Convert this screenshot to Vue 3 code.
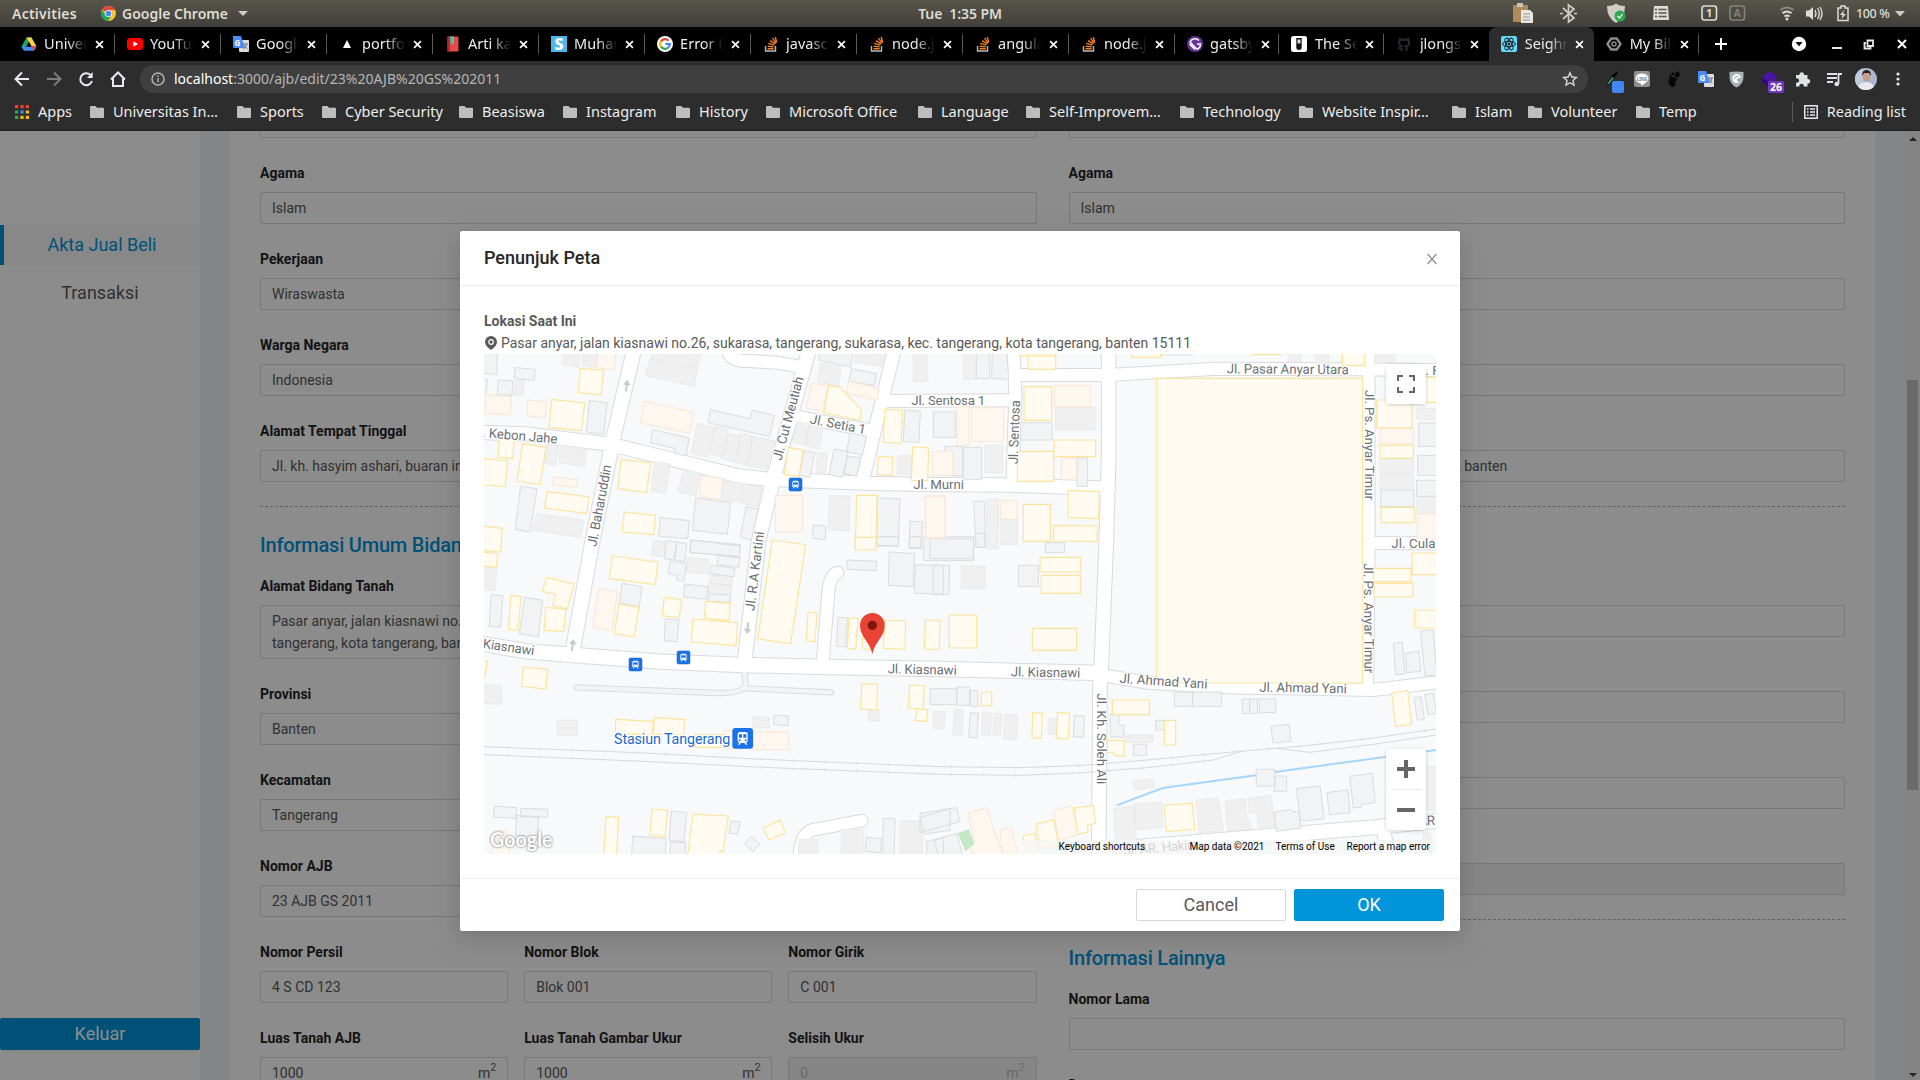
<script setup>
const tabs = [
  { icon: 'drive', title: 'Universitas' },
  { icon: 'youtube', title: 'YouTube' },
  { icon: 'translate', title: 'Google Tr' },
  { icon: 'vercel', title: 'portfolio' },
  { icon: 'book', title: 'Arti kata' },
  { icon: 'scribd', title: 'Muhammad' },
  { icon: 'google', title: 'Error Ha' },
  { icon: 'stack', title: 'javascript' },
  { icon: 'stack', title: 'node.js' },
  { icon: 'stack', title: 'angular' },
  { icon: 'stack', title: 'node.js' },
  { icon: 'gatsby', title: 'gatsby-p' },
  { icon: 'tube', title: 'The Sec' },
  { icon: 'github', title: 'jlongster' },
  { icon: 'react', title: 'Seighnals', active: true },
  { icon: 'gcp', title: 'My Billing' },
]
const bookmarks = [
  ['Universitas In…', 147], ['Sports', 85], ['Cyber Security', 137], ['Beasiswa', 104],
  ['Instagram', 113], ['History', 90], ['Microsoft Office', 152], ['Language', 108],
  ['Self-Improvem…', 154], ['Technology', 119], ['Website Inspir…', 153], ['Islam', 76],
  ['Volunteer', 108], ['Temp', 80],
]
const people = [
  [['Agama', 'Islam'], ['Pekerjaan', 'Wiraswasta'], ['Warga Negara', 'Indonesia'],
    ['Alamat Tempat Tinggal', 'Jl. kh. hasyim ashari, buaran indah, kec. tangerang, kota tangerang, banten']],
  [['Agama', 'Islam'], ['Pekerjaan', 'Wiraswasta'], ['Warga Negara', 'Indonesia'],
    ['Alamat Tempat Tinggal', 'Jl. kh. hasyim ashari buaran indah tangerang, kota tangerang, banten']],
]
const land = [['Provinsi', 'Banten'], ['Kecamatan', 'Tangerang'], ['Nomor AJB', '23 AJB GS 2011']]
const parcel = [['Nomor Persil', '4 S CD 123'], ['Nomor Blok', 'Blok 001'], ['Nomor Girik', 'C 001']]
const area = [['Luas Tanah AJB', '1000'], ['Luas Tanah Gambar Ukur', '1000'], ['Selisih Ukur', '0']]
const region = [['Kabupaten/Kota', 'Kota Tangerang'], ['Kelurahan', 'Sukarasa'], ['Tahun', '2011'], ['Status', '']]

/* map geometry, three units per pixel */
const roads = [
  ['M522 360L461 620L398 930L338 1262', 42],
  ['M60 607L200 612L435 641L480 650L660 694L836 738L917 747L1225 760L1440 764L1638 765L1820 771L1946 775', 40],
  ['M1047 360L940 745L896 930L853 1300', 41],
  ['M1032 412L950 398L870 393Q806 396 806 360', 36],
  ['M1010 560L1225 600', 36],
  ['M1303 360L1208 750', 38],
  ['M1272 513L1665 511', 36],
  ['M1661 360L1666 500L1657 765', 36],
  ['M1946 360L1946 680L1939 930L1924 1307L1920 1370L1916 1890', 41],
  ['M1660 435L1946 435L2270 416L2700 418L2940 421', 36],
  ['M2726 360L2726 960L2722 1375', 35],
  ['M1924 1335L2060 1358L2300 1372L2740 1380L2940 1356', 36],
  ['M2726 939L2940 940', 36],
  ['M60 1240L200 1264L340 1275L600 1295L850 1305L1100 1311L1440 1317L1924 1329', 43],
  ['M1088 1300L1105 1085Q1110 1036 1132 1028', 36],
  ['M1018 1890Q1018 1810 1060 1799L1205 1772', 35],
  ['M1917 1860L2040 1850L2400 1820L2745 1792L2940 1772', 42],
  ['M2768 1790L2790 1900', 40],
]
const buildings = [
  { ox: 0, oy: 0,
    y: [[361,415,431,421,423,496,355,487],[275,508,374,519,364,602,267,593],[118,628,164,628,158,686,114,682],[60,684,143,692,136,770,60,764],[188,640,258,652,240,764,171,753],[483,688,572,698,560,788,473,776],[262,784,387,801,380,851,253,834],[493,846,587,856,581,914,486,906],[60,888,127,895,122,966,60,962],[1106,466,1140,472,1205,540,1200,572,1092,548],[985,652,1030,660,1017,740,972,734],[1275,538,1328,540,1323,641,1270,637],[1255,679,1298,681,1296,736,1252,734],[1358,651,1406,653,1403,752,1354,752],[1190,796,1251,796,1248,960,1186,960]],
    o: [[414,366,468,366,463,421,409,412],[78,494,155,500,151,554,74,550],[203,510,259,515,256,563,201,558],[555,514,701,546,690,610,540,579],[281,740,353,750,350,772,276,764],[723,736,790,745,782,808,719,801],[1055,459,1104,468,1088,544,1039,535],[1166,453,1257,476,1252,511,1160,490],[946,796,82,110],[1418,664,60,72],[1397,798,60,127]],
    g: [[60,366,112,372,110,433,60,430],[165,413,225,418,223,451,163,446],[115,450,158,452,156,496,112,494],[60,446,83,449,78,490,60,488],[388,511,442,518,431,612,379,606],[182,769,231,776,211,906,165,898],[752,539,870,566,877,541,943,556,929,620,744,578],[578,599,687,624,679,678,643,670,646,656,571,638],[707,804,812,817,802,913,697,901],[858,830,895,837,874,930,841,922],[601,862,688,872,683,926,596,919],[1078,366,1178,366,1172,411,1078,391],[1174,416,1250,431,1243,467,1167,454],[1032,662,1064,668,1050,742,1018,736],[1170,608,1219,620,1208,675,1160,665],[1122,657,1165,665,1147,742,1107,734],[1162,678,1202,684,1190,738,1152,731],[1334,540,1381,543,1377,637,1330,635],[1252,804,1320,806,1315,949,1250,946],[1350,873,1388,876,1383,956,1347,952],[1060,885,1098,889,1095,929,1057,924],[693,930,841,944,838,980,690,968]],
    n: [[312,366,360,372,355,412,309,405],[370,366,412,372,406,412,366,408],[166,451,193,453,189,499,162,496],[570,388,712,415,703,470,555,436],[576,366,722,372,714,412,574,385],[262,643,296,647,287,706,252,700],[302,645,380,657,373,711,297,698],[230,850,370,870,363,922,219,902],[584,694,630,702,616,790,574,784],[670,718,721,730,709,798,654,786],[790,750,848,760,842,817,786,808],[850,762,906,770,895,830,844,820],[712,579,765,592,742,682,693,669],[765,590,805,598,788,680,750,670],[806,610,842,618,826,697,785,685],[842,610,880,618,864,705,828,698],[876,618,942,633,920,718,862,706],[1081,399,1142,410,1138,470,1072,456],[1186,366,1272,376,1265,410,1182,396],[1010,574,1050,582,1037,646,998,636],[1046,582,1090,594,1076,658,1034,645],[1073,668,1102,671,1096,733,1068,728],[1108,797,1169,798,1168,902,1105,900],[1360,366,43,88],[1312,677,42,56],[580,932,618,934,614,980,574,976]] },
  { ox: 1440, oy: 0,
    y: [[240,360,108,18],[264,372,83,46],[574,360,88,22],[936,360,88,14],[1207,366,67,41],[252,470,83,101],[342,630,125,50],[232,664,109,90],[385,781,478,785,476,866,384,863],[250,823,81,111],[342,886,473,888,470,935,340,933],[650,445,618,914],[1310,510,106,84],[1320,646,100,39],[1323,832,101,46],[1440,442,60,75]],
    o: [[344,466,107,65],[51,530,35,116],[94,533,97,102],[364,685,46,64],[181,811,50,57],[-45,798,60,125],[1320,595,100,45],[1432,852,60,76]],
    g: [[109,360,40,86],[157,360,200,360,206,447,155,446],[-20,546,67,76],[14,649,55,88],[69,652,56,97],[242,578,94,52],[411,685,32,84],[101,814,134,814,136,952,108,952],[-30,926,131,60],[316,938,58,30],[1322,780,100,50],[1433,676,60,60],[1430,751,60,48],[1436,579,60,70]],
    n: [[70,360,38,88],[134,646,54,82],[346,532,121,68],[140,808,175,808,174,957,142,957],[181,868,51,75],[1045,360,38,37],[1126,360,40,40],[665,360,92,16],[1304,360,60,38],[1320,685,100,45],[1320,735,100,44],[1430,535,60,33],[1430,800,60,53]] },
  { ox: 0, oy: 930,
    y: [[60,36,113,41,109,82,60,77],[260,112,342,132,322,208,279,195,287,163,247,154],[153,166,183,169,174,271,145,268],[257,202,318,207,311,275,252,271],[457,48,594,66,586,134,448,116],[477,192,537,202,522,290,463,282],[613,172,665,179,658,233,607,228],[737,184,811,190,807,242,733,235],[699,237,833,248,828,317,694,306],[937,0,1037,14,992,311,893,297],[1044,216,1072,220,1064,305,1039,303],[1167,234,1194,235,1187,328,1162,325],[1208,290,1232,294,1229,329,1206,327],[1275,240,1337,243,1335,328,1270,325],[1396,240,1440,242,1438,330,1393,327],[60,360,83,364,74,411,60,408],[189,381,263,388,258,447,185,439],[467,538,580,544,578,585,466,580],[583,533,674,538,671,585,580,582],[706,584,85,38],[1206,431,1253,433,1250,510,1201,507],[1349,435,1393,438,1389,508,1345,504],[1370,506,1403,509,1399,545,1366,542],[438,829,476,832,469,960,430,960],[576,807,623,811,615,890,569,886],[699,822,805,828,789,935,780,932,778,960,681,960],[908,864,961,841,976,878,927,899],[1186,-8,62,38]],
    o: [[416,145,473,154,456,272,398,263],[790,572,880,572,880,626,790,626],[878,575,108,54],[100,880,140,870,150,960,92,960]],
    g: [[93,164,128,167,122,262,88,259],[194,172,248,181,235,290,178,282],[486,130,546,140,538,200,478,190],[619,2,650,6,642,60,613,56],[650,6,680,10,674,64,644,60],[630,64,680,70,672,124,650,120,651,106,625,100],[692,0,840,18,838,50,690,38],[775,46,840,54,837,82,771,74],[753,76,825,85,821,110,748,102],[674,132,744,140,740,178,670,171],[748,161,812,166,810,188,744,184],[616,237,656,239,652,305,613,303],[1134,232,1163,233,1157,321,1129,318],[1162,60,1250,64,1249,92,1161,88],[1288,36,1364,41,1359,140,1285,136],[1366,74,1450,76,1450,163,1363,160],[943,525,986,529,983,557,940,553],[103,798,170,803,168,835,100,831],[183,805,263,808,262,832,181,830],[170,826,236,830,233,890,166,886],[518,888,619,896,615,960,514,960],[634,813,680,818,672,905,627,901],[631,906,678,908,674,960,629,960],[812,842,840,846,833,883,807,880],[873,889,900,912,879,935,853,912],[1270,835,1305,835,1302,960,1267,960],[1219,892,1264,896,1261,938,1215,934],[1348,-10,36,35],[1250,-10,66,28],[1381,832,1470,806,1470,871,1392,882],[1422,902,1450,892,1450,960,1440,960]],
    n: [[60,80,110,82,107,152,60,150],[682,52,747,58,743,102,678,97],[752,104,819,110,815,136,748,131],[746,130,817,136,812,163,742,158],[60,434,125,437,125,493,60,490],[291,541,62,45],[879,532,49,31],[1226,510,33,32],[1144,868,66,90],[1016,898,58,60],[1320,842,68,118],[1436,446,10,46]] },
  { ox: 1440, oy: 930,
    y: [[300,52,122,44],[304,106,118,54],[28,225,82,99],[277,265,133,66],[124,456,31,41],[278,517,307,520,304,596,276,593],[353,517,389,520,385,597,349,595],[517,480,111,44],[502,600,553,602,552,648,524,646,522,638,502,636],[673,541,34,74],[1416,39,90,65],[1300,85,113,40],[1302,130,117,41],[1424,210,80,54],[1355,459,1403,451,1415,553,1367,559],[403,804,461,796,467,850,443,855,444,876,413,883],[288,852,341,839,357,917,300,925],[249,888,284,881,300,960,258,960],[672,795,757,790,764,868,679,875]],
    o: [[84,819,139,803,182,925,230,960,110,960,84,912,103,905],[180,870,212,860,240,960,190,960],[340,812,396,797,414,885,355,900]],
    g: [[-50,-10,151,72],[107,-20,28,42],[-20,76,29,76,27,164,-20,164],[235,76,60,63],[-30,446,80,48],[50,441,39,55],[92,451,21,49],[91,518,115,520,111,594,86,591],[403,526,434,529,430,593,400,590],[511,522,536,524,537,555,552,556,551,592,511,590],[647,541,29,29],[580,613,40,34],[703,456,54,43],[758,456,87,43],[907,477,22,44],[929,477,23,44],[958,477,49,41],[993,559,1048,553,1053,604,999,609],[949,688,56,50],[1003,708,37,46],[1069,746,1140,738,1152,837,1082,843],[1161,758,1224,749,1230,818,1168,825],[1229,709,1297,700,1306,788,1265,793,1264,802,1240,804],[1002,816,1053,808,1057,815,1077,816,1083,864,1010,874],[1360,310,1387,307,1394,402,1367,404],[1396,339,1437,334,1442,394,1400,398],[1441,272,1480,270,1490,405,1455,408],[1422,474,1443,470,1453,538,1432,541],[1454,464,1480,459,1490,520,1464,523],[-60,820,50,803,60,845,-60,878],[-40,905,50,880,72,960,-40,960]],
    n: [[64,78,71,69],[44,507,70,510,66,586,38,583],[128,515,156,518,151,586,124,583],[162,519,186,520,182,587,159,585],[195,523,233,525,230,600,190,597],[-20,515,15,515,12,568,-20,566],[325,535,25,48],[556,585,82,22],[576,723,637,716,644,742,583,750],[521,806,582,798,593,960,530,960],[582,793,664,787,669,862,590,869],[768,780,833,773,851,872,777,879],[856,782,918,776,918,820,937,868,862,871],[925,774,994,766,1004,860,955,862,950,818,928,818],[1455,680,40,130],[1450,880,22,40]] },
]
const shape = (p, b) => {
  const pts = p.length === 4
    ? [[p[0], p[1]], [p[0] + p[2], p[1]], [p[0] + p[2], p[1] + p[3]], [p[0], p[1] + p[3]]]
    : p.reduce((a, v, i) => (i % 2 ? a : [...a, [v, p[i + 1]]]), [])
  return 'M' + pts.map(([x, y]) => `${x + b.ox} ${y + b.oy}`).join('L') + 'Z'
}
const layer = (kind) => buildings.map((b) => b[kind].map((p) => shape(p, b)).join('')).join('')
const labels = [
  ['Jl. Kiasnawi', 1283, 1330, 1.2, 207], ['Jl. Kiasnawi', 1652, 1339, 1, 209], ['Kiasnawi', 67, 1254, 8, 156],
  ['. Kebon Jahe', 66, 621, 5, 226], ['Jl. Baharuddin', 409, 951, -79.5, 248], ['Jl. Cut Meutiah', 964, 693, -75, 258],
  ['Jl. Setia 1', 1048, 580, 11, 170], ['Jl. Sentosa 1', 1354, 526, 0, 222], ['Jl. Murni', 1360, 777, 0, 152],
  ['Jl. Sentosa', 1673, 703, -88, 192], ['Jl. Pasar Anyar Utara', 2300, 430, 0.4, 366],
  ['Jl. Ps. Anyar Timur', 2715, 480, 90, 330], ['Jl. Ps. Anyar Timur', 2711, 1000, 89.5, 330],
  ['Jl. Culan', 2794, 955, 0, 155], ['. P', 2896, 435, 0, 46], ['Jl. Ahmad Yani', 1978, 1358, 4, 264],
  ['Jl. Ahmad Yani', 2398, 1385, 1, 262], ['Jl. Kh. Soleh Ali', 1911, 1390, 90, 273],
  ['Jl. R.A Kartini', 883, 1144, -83, 240], ['Jl. AR. Hakim', 1992, 1876, -5, 226], ['. AR', 2858, 1788, -3, 68],
]
const buses = [[987, 744], [507, 1284], [651, 1263]]
const arrows = [[500, 467, 8], [338, 1245, 8], [863, 1195, 187]]
</script>

<template>
  <div class="desktop">
    <header class="topbar">
      <span class="activities">Activities</span>
      <svg class="chrome" viewBox="0 0 16 16"><circle cx="8" cy="8" r="8" fill="#f7c331"/><path d="M8 8L1.1 4A8 8 0 0 1 15 4.2L8 4.4Z" fill="#dd4b3e"/><path d="M1.1 4A8 8 0 0 0 7.5 16L11.3 9.8 5 10.2Z" fill="#1da362"/><circle cx="8" cy="8" r="3.8" fill="#fff"/><circle cx="8" cy="8" r="3" fill="#4688f1"/></svg>
      <span class="app-name">Google Chrome</span><i class="caret"></i>
      <span class="clock">Tue&nbsp; 1:35 PM</span>
      <svg class="tray" viewBox="1500 0 420 27">
        <rect x="1513" y="5" width="15" height="17" rx="1" fill="#b08a5b"/><rect x="1517" y="3" width="6" height="4" fill="#c9c6bd"/><path d="M1521 10h9l3 3v10h-12z" fill="#e8e6e1"/><path d="M1523 14h7M1523 17h7M1523 20h7" stroke="#999"/>
        <path d="M1563 8l11 10-5.500 4V5l5.500 4-11 10" fill="none" stroke="#cfccc4" stroke-width="1.700"/><path d="M1574 13.500h3M1560 13.500h3" stroke="#cfccc4" stroke-width="1.500"/>
        <path d="M1607 6q6 0 9-2.500 3 2.500 9 2.500 0 12-9 17-9-5-9-17z" fill="#cfccc4"/><circle cx="1620" cy="16" r="5.500" fill="#2fa84f"/><path d="M1617.500 16l2 2 3-4" stroke="#fff" fill="none" stroke-width="1.200"/>
        <path d="M1654 6h14l1 14h-16z" fill="#dfdcd5"/><path d="M1655 9.500h2m1.500 0h8M1655 13h2m1.500 0h8M1655 16.500h2m1.500 0h8" stroke="#57544b" stroke-width="1.300"/>
        <rect x="1702" y="6" width="14.500" height="14" rx="2.500" fill="none" stroke="#dfdcd5" stroke-width="1.600"/><text x="1709.200" y="17" text-anchor="middle" font-size="11" font-weight="700" fill="#dfdcd5">1</text>
        <rect x="1730" y="6" width="14.500" height="14" rx="2.500" fill="none" stroke="#86837b" stroke-width="1.600"/><text x="1737.200" y="17" text-anchor="middle" font-size="11" fill="#86837b">A</text>
        <path d="M1780.500 10q6.500-5 13 0" fill="none" stroke="#8d8a82" stroke-width="2"/><path d="M1782.500 13.300q4.500-3.500 9 0M1784.500 16.500q2.500-2 5 0" fill="none" stroke="#dfdcd5" stroke-width="2"/><circle cx="1787" cy="19" r="1.500" fill="#dfdcd5"/>
        <path d="M1806 10.500h3l4-3.500v13l-4-3.500h-3z" fill="#dfdcd5"/><path d="M1815 10q2 3.500 0 7M1817.500 8q3.500 5.500 0 11M1820 7q4 6.500 0 13" fill="none" stroke="#dfdcd5" stroke-width="1.300"/>
        <path d="M1838 8h3V6h4v2h3v12.500h-10z" fill="none" stroke="#dfdcd5" stroke-width="1.500"/><path d="M1844 10l-4 5h2.500l-1 4 4.500-5h-2.800z" fill="#dfdcd5"/>
        <text x="1856" y="18" font-size="12.500" textLength="34" fill="#dfdcd5" font-weight="500">100 %</text><path d="M1895 11h10l-5 5.500z" fill="#cfccc4"/>
      </svg>
    </header>

    <nav class="tabs">
      <div v-for="(t, i) in tabs" :key="i" class="tab" :class="{ active: t.active, before: tabs[i + 1]?.active, narrow: i > 10 }">
        <svg class="fav" viewBox="0 0 16 16">
          <template v-if="t.icon === 'drive'"><path d="M5.500 1.500h5L8 6 3 14.500.500 10.500z" fill="#1da462"/><path d="M5.500 1.500h5l5 9h-5z" fill="#ffcf48"/><path d="M.5 10.500h15L13 14.800H3z" fill="#4688f4"/><path d="M8 6l2.500 4.500h-5z" fill="#000"/><path d="M10.500 10.500h5L13 14.800z" fill="#e5493a"/></template>
          <template v-else-if="t.icon === 'youtube'"><rect y="2" width="16" height="12" rx="3" fill="#f00"/><path d="M6.300 5.300L11 8l-4.700 2.700z" fill="#fff"/></template>
          <template v-else-if="t.icon === 'translate'"><rect x="6" y="4" width="10" height="12" rx="1" fill="#d8dbe0"/><path d="M0 0h8l4 12H1q-1 0-1-1z" fill="#4c8bf5"/><text x="1.500" y="9.500" font-size="8" font-weight="700" fill="#fff">G</text><path d="M10 8h5M12.500 7v1M14 8q-1 4-4 5M11 9l3.500 4" stroke="#70757a" fill="none" stroke-width=".9"/></template>
          <path v-else-if="t.icon === 'vercel'" d="M8 4l4 8H4z" fill="#fff"/>
          <template v-else-if="t.icon === 'book'"><path d="M2.500.500h11v15h-11z" fill="#e34b4b"/><path d="M2.500.500h2.500v15H2.500z" fill="#a92f35"/><path d="M5 .500h4V9L7.500 7.500 6 9z" fill="#42c6a3"/></template>
          <template v-else-if="t.icon === 'scribd'"><rect width="16" height="16" fill="#4db8e8"/><text x="8" y="14" text-anchor="middle" font-size="16" font-weight="800" fill="#fff">S</text></template>
          <template v-else-if="t.icon === 'google'"><circle cx="8" cy="8" r="8" fill="#fff"/><g fill="none" stroke-width="2.200"><path d="M4 5.300A4.800 4.800 0 0 1 11.500 4.700" stroke="#ea4335"/><path d="M4 5.300A4.800 4.800 0 0 0 4 10.700" stroke="#fbbc05"/><path d="M4 10.700A4.800 4.800 0 0 0 11.300 11.500" stroke="#34a853"/><path d="M11.300 11.500A4.800 4.800 0 0 0 12.800 8H8.300" stroke="#4285f4"/></g></template>
          <template v-else-if="t.icon === 'stack'"><path d="M2.500 10v5h10v-5" fill="none" stroke="#bcbbbb" stroke-width="1.400"/><path d="M4.500 12.700h6.200M4.600 10.200l6.200.7M5.300 7.400l6 1.800M7 4.600l5.200 3.300M9.500 2.200l3.600 4.900M12.200 1l1.500 5.500" stroke="#f48024" stroke-width="1.400"/></template>
          <template v-else-if="t.icon === 'gatsby'"><circle cx="8" cy="8" r="8" fill="#663399"/><path d="M2.500 8L8 13.500M12 4.500A5.500 5.500 0 0 0 3 6l7 7.200Q13.500 12 13.500 8H10" fill="none" stroke="#fff" stroke-width="1.500"/></template>
          <template v-else-if="t.icon === 'tube'"><rect width="16" height="16" rx="2.500" fill="#fff"/><path d="M5.300 2h5.400v9.300a2.700 2.700 0 0 1-5.400 0z" fill="#111"/><path d="M6.500 3.500h3v4h-3z" fill="#ddd"/></template>
          <path v-else-if="t.icon === 'github'" d="M5.600 15v-2.300c-2 .3-2.600-1-2.800-1.600M10.400 15v-3c0-.8-.3-1.300-.6-1.600 2-.2 3.400-1.100 3.400-3.600 0-.8-.3-1.500-.8-2 .1-.6.1-1.300-.1-1.800-.9 0-1.700.6-2.100.9a7 7 0 0 0-4.200 0c-.4-.3-1.200-.9-2.100-.9-.2.500-.2 1.200-.1 1.800-.5.500-.8 1.200-.8 2 0 2.500 1.400 3.400 3.400 3.600" fill="none" stroke="#24292e" stroke-width="2.200"/>
          <template v-else-if="t.icon === 'react'"><rect width="16" height="16" rx="2" fill="#61dafb"/><g fill="none" stroke="#20232a"><ellipse cx="8" cy="8" rx="6.500" ry="2.600"/><ellipse cx="8" cy="8" rx="6.500" ry="2.600" transform="rotate(60 8 8)"/><ellipse cx="8" cy="8" rx="6.500" ry="2.600" transform="rotate(120 8 8)"/></g><circle cx="8" cy="8" r="1.300" fill="#20232a"/></template>
          <template v-else><path d="M5.200 2.500h5.600L14.500 8l-3.700 5.500H5.200L1.500 8z" fill="none" stroke="#8b8b8b" stroke-width="2.400"/><circle cx="8" cy="8" r="2" fill="none" stroke="#8b8b8b" stroke-width="1.500"/></template>
        </svg>
        <span class="tab-title">{{ t.title }}</span>
        <svg class="tab-x" viewBox="0 0 10 10"><path d="M1.200 1.200l7.600 7.600M8.800 1.200L1.200 8.800" stroke="#fff" stroke-width="1.900"/></svg>
      </div>
      <svg class="window-controls" viewBox="1700 27 220 34">
        <path d="M1715 44h12M1721 38v12" stroke="#fff" stroke-width="2"/>
        <circle cx="1799" cy="44" r="7.200" fill="#fff"/><path d="M1795.500 42h7l-3.500 4.500z" fill="#111"/>
        <path d="M1832 48h10" stroke="#e8e8e8" stroke-width="2"/>
        <path d="M1867.500 40.500h5.500v5.500h-5.500zM1866 43h-1.500v5.500h6V47" fill="none" stroke="#e8e8e8" stroke-width="1.800"/>
        <path d="M1898 40l8 8M1906 40l-8 8" stroke="#fff" stroke-width="2"/>
      </svg>
    </nav>

    <div class="toolbar">
      <svg class="nav-icons" viewBox="0 61 140 37" fill="none" stroke="#e8eaed" stroke-width="2">
        <path d="M29 79H16M22 72.500L15.500 79l6.500 6.500"/><path d="M47 79h13M54 72.500L60.500 79 54 85.500" stroke="#7c7c7c"/>
        <path d="M91 75.500A6 6 0 1 0 92 81"/><path d="M92.700 72v6H87z" fill="#e8eaed" stroke="none"/><path d="M111 79.500l7-7 7 7M113 78.500v7.500h10v-7.500"/>
      </svg>
      <div class="address">
        <svg class="info" viewBox="0 0 14 14" fill="none" stroke="#b0b3b6" stroke-width="1.500"><circle cx="7" cy="7" r="6"/><path d="M7 6v4.200M7 3.600v1.400"/></svg>
        <span class="url"><b>localhost</b>:3000/ajb/edit/23%20AJB%20GS%202011</span>
        <svg class="star" viewBox="0 0 16 16"><path d="M8 1.800l1.900 4.200 4.500.5-3.400 3 1 4.500L8 11.700 4 14l1-4.500-3.400-3 4.500-.5z" fill="none" stroke="#d5d7d9" stroke-width="1.400"/></svg>
      </div>
      <svg class="extensions" viewBox="1588 61 332 37">
        <path d="M1606 86l2-4 5-6 2 1.500-5.500 6.500z" fill="#3aa655" stroke="#111"/><path d="M1611 76l6-4.500 1 1.500-4 5z" fill="#000"/><rect x="1612" y="81" width="12" height="12" rx="2" fill="#4285f4"/>
        <rect x="1634" y="71" width="16" height="16" rx="2" fill="#8f8f8f"/><path d="M1642 73.500c-4 0-6.500 2.200-6.500 5 0 2.500 2.300 4.500 5.500 4.900v2.300c3-1.500 7.500-4 7.500-7.200 0-2.800-2.500-5-6.500-5z" fill="#fff"/><text x="1642" y="80.500" font-size="4.500" font-weight="800" text-anchor="middle" fill="#888">LINE</text>
        <path d="M1677 71.500q3.500.500 2.500 4-1 2.500-3 2t-1-4q.5-1.500 1.500-2zM1669 78q6-3 8.500 2-2 1.500-2.500 1 1.500 5-2 6-4-.500-4.500-5z" fill="#050505"/><circle cx="1673" cy="74" r="1.400" fill="#050505"/><circle cx="1670.500" cy="76" r="1.200" fill="#050505"/>
        <rect x="1704" y="74" width="10" height="13" rx="1" fill="#d8dbe0"/><path d="M1698 71h8l4 12h-12z" fill="#4c8bf5"/><text x="1699.500" y="80.500" font-size="8" font-weight="700" fill="#fff">G</text><path d="M1708 78h5M1712 78q-1 4-3 5M1709 79l3 4" stroke="#70757a" fill="none"/>
        <path d="M1729.500 72q7-1 14 0v5q0 7-7 10.500-7-3.500-7-10.500z" fill="#aab0b8"/><path d="M1740 77a3.500 3.500 0 1 0-3 5q-2-2-.500-4z" fill="none" stroke="#fff" stroke-width="1.800"/>
        <path d="M1762 77l8-6 8 6-7 6z" fill="#4a14a8"/><path d="M1762 78v4l8 6v-5z" fill="#2e0a80"/><rect x="1768" y="81" width="16" height="12" rx="2" fill="#7338c8"/><text x="1776" y="91.300" font-size="10.500" font-weight="700" text-anchor="middle" fill="#fff">26</text>
        <path d="M1796 75h3.500a2.300 2.300 0 1 1 4.500 0h3.500v4a2.300 2.300 0 1 1 0 4.500v3h-3.800a2.200 2.200 0 1 0-4.200 0h-3.500v-4a2.200 2.200 0 1 0 0-4z" fill="#dfe1e5"/>
        <path d="M1827 74h10M1827 78h10M1827 82h6" stroke="#dfe1e5" stroke-width="1.800"/><path d="M1838.500 84V74h3.500" fill="none" stroke="#dfe1e5" stroke-width="1.800"/><circle cx="1836.700" cy="84" r="2.300" fill="#dfe1e5"/>
        <clipPath id="face"><circle cx="1866" cy="79" r="11"/></clipPath><g clip-path="url(#face)"><path d="M1855 68h22v22h-22z" fill="#a9b6cd"/><path d="M1855 68h8v22h-8z" fill="#bfcadb"/><path d="M1858 91q0-9 8-9t9 9z" fill="#e8e9f2"/><ellipse cx="1866.500" cy="76.500" rx="3.800" ry="5" fill="#c99c83"/><path d="M1862 76q0-6 4.500-6t4.500 6l-2-3h-5z" fill="#241d22"/></g>
        <g fill="#e8eaed"><circle cx="1898" cy="74" r="1.600"/><circle cx="1898" cy="79" r="1.600"/><circle cx="1898" cy="84" r="1.600"/></g>
      </svg>
    </div>

    <div class="bookmarks">
      <div class="apps">
        <svg viewBox="0 0 13 13" class="apps-icon"><path d="M0 0h3v3H0zM5 0h3v3H5zM10 0h3v3h-3z" fill="#ea4335"/><path d="M0 5h3v3H0zM0 10h3v3H0z" fill="#34a853"/><path d="M5 5h3v3H5z" fill="#4285f4"/><path d="M10 5h3v3h-3zM5 10h3v3H5zM10 10h3v3h-3z" fill="#fbbc05"/></svg>
        <span>Apps</span>
      </div>
      <div v-for="b in bookmarks" :key="b[0]" class="bookmark" :style="{ width: b[1] + 'px' }">
        <svg class="folder" viewBox="0 0 14 12"><path d="M1 0h4.500L7 1.800h6q1 0 1 1V11q0 1-1 1H1q-1 0-1-1V1q0-1 1-1z" fill="#bdbdbd"/></svg>
        <span>{{ b[0] }}</span>
      </div>
      <div class="reading">
        <svg viewBox="0 0 14 14" class="apps-icon"><path d="M.8.800h12.400v12.400H.8z" fill="none" stroke="#e8eaed" stroke-width="1.500"/><path d="M3 4h1.500M6 4h5M3 7h1.500M6 7h5M3 10h1.500M6 10h5" stroke="#e8eaed" stroke-width="1.500"/></svg>
        <span>Reading list</span>
      </div>
    </div>

    <main class="page">
      <aside class="sidebar">
        <div class="menu-item selected">Akta Jual Beli</div>
        <div class="menu-item">Transaksi</div>
        <button class="primary logout">Keluar</button>
      </aside>
      <section class="card">
        <div class="column">
          <div class="input cut"></div>
          <div v-for="f in people[0]" :key="f[0]" class="field"><label>{{ f[0] }}</label><div class="input">{{ f[1] }}</div></div>
          <hr><h2>Informasi Umum Bidang Tanah</h2>
          <div class="field"><label>Alamat Bidang Tanah</label><div class="input area">Pasar anyar, jalan kiasnawi no.26, sukarasa, tangerang, sukarasa, kec.<br>tangerang, kota tangerang, banten 15111</div></div>
          <div v-for="f in land" :key="f[0]" class="field"><label>{{ f[0] }}</label><div class="input">{{ f[1] }}</div></div>
          <div class="triple"><div v-for="f in parcel" :key="f[0]" class="field"><label>{{ f[0] }}</label><div class="input">{{ f[1] }}</div></div></div>
          <div class="triple"><div v-for="(f, i) in area" :key="f[0]" class="field"><label>{{ f[0] }}</label><div class="input unit" :class="{ disabled: i === 2 }">{{ f[1] }}<span>m<sup>2</sup></span></div></div></div>
        </div>
        <div class="column">
          <div class="input cut"></div>
          <div v-for="f in people[1]" :key="f[0]" class="field"><label>{{ f[0] }}</label><div class="input">{{ f[1] }}</div></div>
          <hr><h2>&nbsp;</h2>
          <div v-for="(f, i) in region" :key="f[0]" class="field"><label>{{ f[0] }}</label><div class="input" :class="{ disabled: i === 3 }">{{ f[1] }}</div></div>
          <hr><h2>Informasi Lainnya</h2>
          <div class="field"><label>Nomor Lama</label><div class="input"></div></div>
          <div class="field"><label>Desa</label></div>
        </div>
      </section>
      <div class="scrollbar"><i class="up"></i><div class="thumb"></div><i class="down"></i></div>

      <div class="mask">
        <div class="modal">
          <div class="modal-head"><span>Penunjuk Peta</span><svg viewBox="0 0 12 12"><path d="M1.500 1l9 10M10.500 1l-9 10" stroke="#8c8c8c" stroke-width="1.200"/></svg></div>
          <div class="modal-body">
            <div class="here">Lokasi Saat Ini</div>
            <div class="place"><svg viewBox="0 0 12 14"><path d="M6 0a6 6 0 0 1 6 6q0 4-6 8-6-4-6-8a6 6 0 0 1 6-6z" fill="#595959"/><circle cx="6" cy="6" r="2.300" fill="none" stroke="#fff" stroke-width="1.200"/></svg>Pasar anyar, jalan kiasnawi no.26, sukarasa, tangerang, sukarasa, kec. tangerang, kota tangerang, banten 15111</div>
            <div class="map">
              <svg class="map-canvas" viewBox="72 372 2856 1500">
                <rect x="72" y="372" width="2856" height="1500" fill="#f8f9fb"/>
                <g fill="none" stroke="#dadce0"><path d="M350 1372L770 1389Q850 1390 857 1365L853 1320M857 1375L1113 1387" stroke-width="19" stroke-linecap="round"/></g>
                <g fill="none" stroke="#d8dade" stroke-linecap="round" stroke-linejoin="round"><path v-for="(r, i) in roads" :key="i" :d="r[0]" :stroke-width="r[1] + 6"/></g>
                <path d="M350 1372L770 1389Q850 1390 857 1365L853 1320M857 1375L1113 1387" fill="none" stroke="#f1f3f4" stroke-width="13" stroke-linecap="round"/>
                <g fill="none" stroke="#fff" stroke-linecap="round" stroke-linejoin="round"><path v-for="(r, i) in roads" :key="i" :d="r[0]" :stroke-width="r[1]"/></g>
                <path :d="layer('n')" fill="#f0f0f0" stroke="#e6e6e6" stroke-width="2"/>
                <path :d="layer('g')" fill="#f1f3f4" stroke="#dadce0" stroke-width="3"/>
                <path :d="layer('o')" fill="#fef7f0" stroke="#fbe6d2" stroke-width="3"/>
                <path :d="layer('y')" fill="#fffbf0" stroke="#fde49d" stroke-width="3.500"/>
                <path d="M1493 1810l33-13 18 45-28 22z" fill="#c3e8c6"/>
                <g fill="none" stroke="#d6d8da" stroke-width="3">
                  <path d="M72 1550L530 1568 910 1588 1440 1610 1680 1613 1870 1606 2060 1590 2340 1564 2540 1547 2740 1524 2928 1497"/>
                  <path d="M72 1574L530 1593 910 1612 1440 1633 1680 1636 1870 1628 2060 1613 2260 1590 2350 1562M2450 1555L2550 1567 2740 1543 2928 1515"/>
                  <path d="M145 1553L530 1568 910 1588 1440 1610 1680 1613 1870 1606 2060 1590 2340 1564 2540 1547 2740 1524 2928 1497M145 1577L530 1593 910 1612 1440 1633 1680 1636 1870 1628 2060 1613 2260 1590" stroke-width="10" stroke-dasharray="2 93"/>
                </g>
                <path d="M1970 1726L2108 1674 2388 1636M2445 1626L2780 1580 2928 1560" fill="none" stroke="#a6d6fd" stroke-width="6"/>
                <g v-for="(a, i) in arrows" :key="'a' + i" :transform="`translate(${a[0]} ${a[1]}) rotate(${a[2]})`"><path d="M0 18V-8" stroke="#c6c9cb" stroke-width="6"/><path d="M-11-2L0-18 11-2z" fill="#c6c9cb"/></g>
                <g class="streets"><text v-for="(l, i) in labels" :key="'l' + i" :transform="`translate(${l[1]} ${l[2]}) rotate(${l[3]})`" :textLength="l[4]">{{ l[0] }}</text></g>
                <g v-for="(b, i) in buses" :key="'b' + i" :transform="`translate(${b[0]} ${b[1]})`"><rect width="39" height="39" rx="5" fill="#1a73e8" stroke="#1259c3" stroke-width="1.500"/><path d="M10 13q0-5 5-5h9q5 0 5 5v14h-2v4h-4v-4h-7v4h-4v-4h-2z" fill="#fff"/><path d="M12.500 13h14v7h-14z" fill="#1a73e8"/><circle cx="14" cy="24" r="1.800" fill="#1a73e8"/><circle cx="25" cy="24" r="1.800" fill="#1a73e8"/></g>
                <text class="station" x="462" y="1542" textLength="349">Stasiun Tangerang</text>
                <g transform="translate(817 1494)"><rect width="62" height="62" rx="9" fill="#1a73e8"/><path d="M16 19q0-7 8-7h14q8 0 8 7v19q0 5-5 6l5 6h-6l-4-5h-10l-4 5h-6l5-6q-5-1-5-6z" fill="#fff"/><path d="M20 19h9v10h-9zM33 19h9v10h-9z" fill="#1a73e8"/><circle cx="22" cy="37" r="3" fill="#1a73e8"/><circle cx="40" cy="37" r="3" fill="#1a73e8"/></g>
                <path d="M1237 1272c-8-38-37-50-37-86a37 37 0 0 1 74 0c0 36-29 48-37 86z" fill="#ea4335"/><circle cx="1237" cy="1186" r="14" fill="#811411"/>
                <text class="logo" x="90" y="1850" textLength="188" lengthAdjust="spacingAndGlyphs">Google</text>
              </svg>
              <div class="fullscreen"><svg viewBox="0 0 18 18"><path d="M1 6V1h5M12 1h5v5M17 12v5h-5M6 17H1v-5" fill="none" stroke="#666" stroke-width="2"/></svg></div>
              <div class="zoom"><svg viewBox="0 0 18 18"><path d="M0 9h18M9 0v18" stroke="#666" stroke-width="4"/></svg><i></i><svg viewBox="0 0 18 18"><path d="M0 9h18" stroke="#666" stroke-width="4"/></svg></div>
              <div class="attribution"><span class="keys">Keyboard shortcuts</span><span class="data">Map data ©2021</span><span class="terms">Terms of Use</span><span>Report a map error</span></div>
            </div>
          </div>
          <div class="modal-foot"><button>Cancel</button><button class="primary">OK</button></div>
        </div>
      </div>
    </main>
  </div>
</template>

<style>
body { margin: 0; overflow: hidden; }
</style>

<style scoped>
* { box-sizing: border-box; }
.desktop { width: 1920px; height: 1080px; display: flex; flex-direction: column; overflow: hidden; font-family: "Noto Sans", sans-serif; font-size: 14.5px; color: #eee; white-space: nowrap; }
svg { flex: none; display: block; }
.topbar { height: 27px; flex: none; display: flex; align-items: center; position: relative; background: linear-gradient(#58554c, #403f39); color: #dfdbd2; font-weight: 600; font-size: 14px; padding-left: 12px; }
.activities { width: 89px; letter-spacing: .25px; }
.chrome { width: 15px; height: 15px; margin-right: 6px; }
.app-name { width: 116px; }
.caret { border: 5px solid transparent; border-top: 5.500px solid #cfccc4; border-bottom: 0; }
.clock { position: absolute; left: 860px; width: 200px; text-align: center; letter-spacing: -.1px; }
.tray { width: 420px; height: 27px; margin-left: auto; }
.tabs { height: 34px; flex: none; display: flex; background: #000; padding-left: 8.600px; }
.tab { width: 106px; flex: none; display: flex; align-items: center; padding-left: 12px; position: relative; }
.tab.narrow { width: 104.900px; }
.tab::after { content: ""; position: absolute; right: 0; top: 7px; width: 1px; height: 20px; background: #5a5a5a; }
.tab.before::after, .tab.active::after { display: none; }
.tab.active { background: #2d2d2d; border-radius: 8px 8px 0 0; }
.fav { width: 16px; height: 16px; }
.tab-title { width: 43px; height: 22px; line-height: 20px; margin-left: 7.500px; overflow: hidden; -webkit-mask: linear-gradient(90deg, #000 55%, transparent 100%); mask: linear-gradient(90deg, #000 55%, transparent 100%); }
.tab-x { width: 9px; height: 9px; margin-left: 7.500px; }
.window-controls { width: 220px; height: 34px; margin-left: auto; }
.toolbar { height: 37px; flex: none; display: flex; background: #2d2d2d; }
.nav-icons { width: 140px; height: 37px; }
.address { flex: 1; height: 28px; margin-top: 4px; border-radius: 14px; background: #3f3f3f; display: flex; align-items: center; padding: 0 10px 0 11px; color: #b5b5b5; }
.info { width: 14px; height: 14px; margin-right: 9px; }
.url { font-size: 14px; line-height: 18px; padding-bottom: 1px; }
.url b { font-weight: 400; color: #fff; }
.star { width: 16px; height: 16px; margin-left: auto; }
.extensions { width: 332px; height: 37px; }
.bookmarks { height: 33px; flex: none; display: flex; align-items: center; background: #2d2d2d; border-bottom: 1px solid #1f1f1f; padding: 0 14px 4px 15px; }
.bookmarks span { line-height: 20px; padding-bottom: 2px; }
.apps { width: 75px; display: flex; align-items: center; gap: 9px; }
.apps-icon { width: 14px; height: 14px; }
.bookmark { display: flex; align-items: center; gap: 9px; flex: none; }
.folder { width: 14px; height: 12px; }
.reading { margin-left: auto; height: 20px; display: flex; align-items: center; gap: 9px; border-left: 1px solid #5c5c5c; padding-left: 11px; }

.page { flex: 1; min-height: 0; position: relative; display: flex; background: #f0f2f5; font-family: Roboto, sans-serif; font-size: 14px; line-height: 22px; color: #595959; overflow: hidden; }
.sidebar { width: 200px; flex: none; background: #fff; padding-top: 94px; display: flex; flex-direction: column; }
.menu-item { height: 40px; margin-bottom: 8px; line-height: 39px; font-size: 18px; text-align: center; }
.selected { background: #f7f7f7; border-left: 4px solid #0094da; color: #0094da; }
button { width: 150px; height: 32px; border: 1px solid #d9d9d9; border-radius: 2px; background: #fff; font: 18px/28px Roboto, sans-serif; color: #595959; padding: 0; box-shadow: 0 2px 0 rgba(0, 0, 0, .02); }
button.primary { background: #0094da; border-color: #0094da; color: #fff; }
.sidebar .logout { width: 200px; margin: auto 0 30px; }
.card { width: 1645px; margin-left: 30px; flex: none; background: #fff; padding: 0 30px; display: flex; gap: 32px; height: 1100px; }
.column { flex: 1; min-width: 0; }
.field { margin-bottom: 24px; flex: 1; min-width: 0; }
label { display: block; height: 22px; margin-bottom: 8px; font-weight: 700; color: #262626; }
.input { height: 32px; border: 1px solid #d9d9d9; border-radius: 2px; padding: 4px 11px; }
.cut { height: 7px; border-top: 0; border-radius: 0 0 2px 2px; padding: 0; margin-bottom: 24px; }
.area { height: 54px; }
.disabled { background: #f5f5f5; color: #bfbfbf; }
.unit { display: flex; justify-content: space-between; }
sup { font-size: 10.500px; line-height: 0; vertical-align: baseline; position: relative; top: -7px; }
.triple { display: flex; gap: 16px; }
hr { border: 0; border-top: 1px dashed #b0b0b0; margin: 0 0 24px; }
h2 { font-size: 20px; line-height: 28px; font-weight: 500; letter-spacing: -.2px; color: #0094da; margin: 0 0 16px; }
.scrollbar { width: 15px; margin-left: auto; background: #f1f1f1; display: flex; flex-direction: column; align-items: center; padding: 6px 0 3px; }
.up, .down { border: 4px solid transparent; }
.up { border-top: 0; border-bottom: 4px solid #444; }
.down { border-bottom: 0; border-top: 4px solid #444; margin-top: auto; }
.thumb { width: 11px; height: 410px; margin-top: 239px; background: #c1c1c1; }
.mask { position: absolute; inset: 0; background: rgba(0, 0, 0, .45); padding: 100px 0 0 460px; }
.modal { width: 1000px; height: 700px; background: #fff; border-radius: 2px; box-shadow: 0 3px 6px -4px rgba(0, 0, 0, .12), 0 6px 16px rgba(0, 0, 0, .08), 0 9px 28px 8px rgba(0, 0, 0, .05); }
.modal-head { height: 55px; border-bottom: 1px solid #f0f0f0; display: flex; align-items: center; justify-content: space-between; padding: 0 22px 1px 24px; color: #262626; font-size: 18px; font-weight: 500; }
.modal-head svg { width: 12px; height: 12px; margin-top: 3px; }
.modal-body { padding: 24px; }
.here { font-weight: 700; }
.place { display: flex; align-items: center; }
.place svg { width: 12px; height: 14px; margin: 0 4px 0 1px; }
.map { position: relative; width: 952px; height: 500px; overflow: hidden; }
.map-canvas { width: 952px; height: 500px; }
.streets { font-size: 40px; font-weight: 400; fill: #6a7076; stroke: #fff; stroke-width: 7px; stroke-linejoin: round; paint-order: stroke; }
.station { font-size: 43px; fill: #1967d2; stroke: #fff; stroke-width: 7px; paint-order: stroke; }
.logo { font-family: Lato, sans-serif; font-weight: 700; font-size: 64px; fill: #fff; filter: drop-shadow(0 0 3px #999) drop-shadow(0 0 2px #aaa); }
.fullscreen, .zoom { position: absolute; right: 10px; width: 40px; background: #fff; border-radius: 2px; box-shadow: 0 1px 4px -1px rgba(0, 0, 0, .3); display: flex; align-items: center; justify-content: center; }
.fullscreen { top: 10px; height: 40px; }
.fullscreen svg, .zoom svg { width: 18px; height: 18px; }
.zoom { top: 395px; height: 81px; flex-direction: column; gap: 11px; }
.zoom i { width: 30px; height: 1px; background: #e6e6e6; }
.attribution { position: absolute; right: 0; bottom: 0; height: 14px; display: flex; background: rgba(245, 245, 245, .75); font-size: 10px; line-height: 14px; color: #000; padding: 0 6px 0 36px; }
.keys { width: 131px; }
.data { width: 86px; }
.terms { width: 71px; }
.modal-foot { border-top: 1px solid #f0f0f0; padding: 10px 16px; display: flex; justify-content: flex-end; gap: 8px; }
</style>
